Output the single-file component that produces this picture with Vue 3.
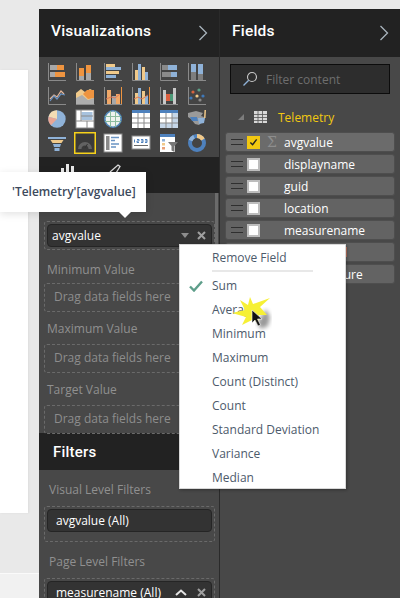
<script setup>
const fields = [
  { name: 'avgvalue', checked: true, sigma: true },
  { name: 'displayname' },
  { name: 'guid' },
  { name: 'location' },
  { name: 'measurename' },
  { name: 'sensorlevel', warn: true },
  { name: 'tempmeasure' }
]
const menuItems = ['Sum', 'Average', 'Minimum', 'Maximum', 'Count (Distinct)', 'Count', 'Standard Deviation', 'Variance', 'Median']
const zones = ['Minimum Value', 'Maximum Value', 'Target Value']
</script>

<template>
  <div class="page">
    <div class="canvas-area">
      <div class="canvas-card"></div>
      <div class="canvas-foot"></div>
    </div>

    <section class="viz">
      <header class="head">
        <h2>Visualizations</h2>
        <svg class="chev" width="10" height="16" viewBox="0 0 10 16"><path d="M1.5 1 L8.5 8 L1.5 15" fill="none" stroke="#a9b4bd" stroke-width="1.3"/></svg>
      </header>

      <div class="gallery">
        <svg viewBox="0 0 20 20"><path d="M1.5 2v17.5H19" class="ax"/><rect x="3" y="4" width="7" height="5" fill="#a8a8a8"/><rect x="10" y="4" width="7" height="5" fill="#ee9440"/><rect x="3" y="11" width="5" height="5" fill="#a8a8a8"/><rect x="8" y="11" width="10" height="5" fill="#ee9440"/></svg>
        <svg viewBox="0 0 20 20"><path d="M1.5 2v17.5H19" class="ax"/><rect x="4" y="7" width="5" height="8" fill="#ee9440"/><rect x="4" y="15" width="5" height="4" fill="#a8a8a8"/><rect x="11" y="4" width="5" height="8" fill="#ee9440"/><rect x="11" y="12" width="5" height="7" fill="#a8a8a8"/></svg>
        <svg viewBox="0 0 20 20"><path d="M1.5 2v17.5H19" class="ax"/><rect x="3" y="3" width="9" height="3" fill="#f0c98a"/><rect x="3" y="6" width="15" height="3" fill="#8fb2d8"/><rect x="3" y="10" width="13" height="3" fill="#f0c98a"/><rect x="3" y="14" width="10" height="3" fill="#8fb2d8"/></svg>
        <svg viewBox="0 0 20 20"><path d="M1.5 2v17.5H19" class="ax"/><rect x="4" y="9" width="3" height="10" fill="#f0c98a"/><rect x="7" y="3" width="3" height="16" fill="#8fb2d8"/><rect x="11" y="6" width="3" height="13" fill="#f0c98a"/><rect x="14" y="11" width="3" height="8" fill="#8fb2d8"/></svg>
        <svg viewBox="0 0 20 20"><path d="M1.5 2v17.5H19" class="ax"/><rect x="3" y="4" width="6" height="5" fill="#8a8a8a"/><rect x="9" y="4" width="9" height="5" fill="#8fb2d8"/><rect x="3" y="11" width="9" height="5" fill="#8a8a8a"/><rect x="12" y="11" width="6" height="5" fill="#8fb2d8"/></svg>
        <svg viewBox="0 0 20 20"><path d="M1.5 2v17.5H19" class="ax"/><rect x="4" y="3" width="5" height="8" fill="#8fb2d8"/><rect x="4" y="11" width="5" height="8" fill="#7d7d7d"/><rect x="11" y="3" width="5" height="10" fill="#8fb2d8"/><rect x="11" y="13" width="5" height="6" fill="#7d7d7d"/></svg>

        <svg viewBox="0 0 20 20"><path d="M1.5 2v17.5H19" class="ax"/><path d="M3 14l4-4 3 2 4-6 3 3" fill="none" stroke="#e8b99b" stroke-width="1.2"/><path d="M3 16l4-5 3 3 4-5 4 1" fill="none" stroke="#6a94c4" stroke-width="1.2"/></svg>
        <svg viewBox="0 0 20 20"><path d="M1 19.5H19.5" class="ax"/><path d="M1 8l5-4 4 3 5-3 4 2v13H1z" fill="#f0c98a"/><path d="M8 9l4-4 7 0v8l-6 1z" fill="#ee9440"/><path d="M1 13l6-3 6 5 6-2v6H1z" fill="#adadad"/></svg>
        <svg viewBox="0 0 20 20"><path d="M1.5 2v17.5H19" class="ax"/><path d="M18.5 2v17" stroke="#ee9440" stroke-width="1"/><rect x="4" y="5" width="4" height="14" fill="#f0a868"/><rect x="9" y="11" width="4" height="8" fill="#a8a8a8"/><rect x="13" y="9" width="4" height="10" fill="#f0a868"/><path d="M3 14l5-2 4 1 5-4" fill="none" stroke="#dc7a5a"/></svg>
        <svg viewBox="0 0 20 20"><path d="M1.5 2v17.5H19" class="ax"/><path d="M18.5 2v17" stroke="#ee9440" stroke-width="1"/><rect x="4" y="8" width="3" height="11" fill="#f0c98a"/><rect x="7" y="3" width="3" height="16" fill="#8fb2d8"/><rect x="11" y="6" width="3" height="13" fill="#f0c98a"/><rect x="14" y="11" width="3" height="8" fill="#8fb2d8"/><path d="M3 14l4-2 4 2 6-4" fill="none" stroke="#dc7a5a"/></svg>
        <svg viewBox="0 0 20 20"><path d="M1.5 2v17.5H19" class="ax"/><rect x="4" y="5" width="3" height="14" fill="#c9c9c9"/><rect x="7" y="9" width="4" height="7" fill="#dc5f3f"/><rect x="11" y="9" width="3" height="7" fill="#4c9a78"/><rect x="14" y="3" width="3" height="16" fill="#c9c9c9"/></svg>
        <svg viewBox="0 0 20 20"><path d="M1.5 2v17.5H19" class="ax"/><circle cx="6" cy="7" r="1.6" fill="#d8643e"/><circle cx="12" cy="5" r="1.6" fill="#5c9f86"/><circle cx="4" cy="13" r="1.6" fill="#3f78b8"/><circle cx="10" cy="11" r="1.6" fill="#f0c98a"/><circle cx="16" cy="11" r="1.6" fill="#3f78b8"/><circle cx="13" cy="15" r="1.6" fill="#8a8a8a"/></svg>

        <svg viewBox="0 0 20 20"><circle cx="10" cy="10" r="8.7" fill="#8fb2d8"/><path d="M10 10V1.3A8.7 8.7 0 0 0 1.6 7.7z" fill="#f3dcb4"/><path d="M10 10L1.6 7.7A8.7 8.7 0 0 0 4 16.3z" fill="#e9a695"/></svg>
        <svg viewBox="0 0 20 20"><rect x="1" y="1" width="18" height="18" fill="#fff" stroke="#8a8a8a"/><rect x="6.5" y="3" width="11" height="8" fill="#a7c2de"/><path d="M1 12h18M6 1v11M12 12v7M6 7h12" stroke="#8a8a8a" fill="none"/></svg>
        <svg viewBox="0 0 20 20"><circle cx="10" cy="10" r="8.2" fill="#eef3ee" stroke="#4f86b8" stroke-width="1.6"/><path d="M2 7.5h16M2 12.5h16M7.5 2v16M12.5 2v16" stroke="#8cbc9e" fill="none"/></svg>
        <svg viewBox="0 0 20 20"><rect x="1" y="1" width="18" height="18" fill="#fff"/><rect x="1" y="1" width="18" height="3" fill="#4e81bd"/><path d="M1 9h18M1 14h18M7 4v15M13 4v15" stroke="#8a8a8a" fill="none"/></svg>
        <svg viewBox="0 0 20 20"><rect x="1" y="1" width="18" height="18" fill="#fff"/><rect x="1" y="1" width="18" height="3" fill="#4e81bd"/><rect x="13" y="4" width="6" height="15" fill="#c5d6e8"/><rect x="1" y="14" width="18" height="5" fill="#c5d6e8"/><path d="M1 9h18M1 14h18M7 4v15M13 4v15" stroke="#8a8a8a" fill="none"/></svg>
        <svg viewBox="0 0 20 20"><path d="M1 4l8-2 7 2-2 3 3 1-1 4-4 4-4-1-4-5-3-2z" fill="#9a9a9a"/><path d="M3 8h7l1 4H5z" fill="#4e81bd"/><path d="M11 9h7l-1 5-5 1z" fill="#8fb2d8"/><path d="M17.5 1h1.5l-.5 8h-1.5z" fill="#f0c98a"/></svg>

        <svg viewBox="0 0 20 20"><path d="M1 4h18v2H1z" fill="#8fb2d8"/><path d="M3.5 7h13l-2 3h-9z" fill="#f0c98a"/><path d="M6 11h8l-1 3H7z" fill="#8fb2d8"/><rect x="7.5" y="15" width="5" height="3" fill="#8fb2d8"/></svg>
        <svg class="selected" viewBox="0 0 22 22"><rect x="0.75" y="0.75" width="20.5" height="20.5" fill="#3a3a3a" stroke="#f7d21a" stroke-width="1.5"/><path d="M4 17A7 7 0 0 1 18 17h-3.5A3.500 3.500 0 0 0 7.500 17z" fill="#626262"/><path d="M11 16l2.500-4" stroke="#333"/></svg>
        <svg viewBox="0 0 20 20"><rect x="1" y="1" width="18" height="18" fill="#fff" stroke="#8a8a8a"/><rect x="3" y="3" width="3.5" height="14" fill="#8a8a8a"/><path d="M8 4.5h8M8 7.5h4M8 11h8M8 14h5" stroke="#6a94c4" fill="none" stroke-width="1.3"/></svg>
        <svg viewBox="0 0 20 20"><rect x="1" y="3" width="18" height="13" fill="#fff" stroke="#8a8a8a"/><path d="M3.5 9.5V6.5M6 6.5h2v1.5H6v1.5h2M10 6.5h2v3h-2M12 8h-2M14 6.500h2v1.500h-2M16 8v1.500h-2" stroke="#4e81bd" fill="none"/><path d="M3 12.5h14" stroke="#6a6a6a" fill="none"/></svg>
        <svg viewBox="0 0 20 20"><rect x="1" y="1" width="15" height="18" fill="#fff"/><rect x="1" y="1" width="15" height="3" fill="#4e81bd"/><rect x="3" y="6" width="3" height="2.5" fill="#8fb2d8"/><rect x="3" y="10" width="3" height="2.5" fill="#f0c98a"/><rect x="3" y="14" width="3" height="2.5" fill="#e9a17a"/><path d="M9 9h10l-3.5 4v6l-3-1.5V13z" fill="#777"/></svg>
        <svg viewBox="0 0 20 20"><circle cx="10" cy="10" r="7" fill="none" stroke="#4e81bd" stroke-width="4"/><path d="M10 3a7 7 0 0 1 6 3.5" fill="none" stroke="#f0c98a" stroke-width="4"/><path d="M3.5 7.5A7 7 0 0 1 7 3.7" fill="none" stroke="#8fb2d8" stroke-width="4"/></svg>
      </div>

      <div class="tabs">
        <svg width="16" height="9" viewBox="0 0 16 9"><path d="M1 4h3v5H1zM6 0h3v9H6zM11 2h3v7h-3z" fill="#e8e8e8"/></svg>
        <svg width="12" height="9" viewBox="0 0 12 9"><path d="M1 8L9 1l2 1.5L7 9" fill="none" stroke="#d8d8d8" stroke-width="1.3"/></svg>
      </div>

      <div class="wells">
        <i class="scroll"></i>
        <div class="well first">
          <div class="pill tight">
            <span>avgvalue</span>
            <svg class="caret" width="8" height="5" viewBox="0 0 8 5"><path d="M0 0h8L4 5z" fill="#8d8d8d"/></svg>
            <svg class="x" width="9" height="9" viewBox="0 0 9 9"><path d="M1 1l7 7M8 1L1 8" stroke="#a0a0a0" stroke-width="2"/></svg>
          </div>
        </div>
        <template v-for="z in zones" :key="z">
          <div class="label">{{ z }}</div>
          <div class="well drop">Drag data fields here</div>
        </template>
      </div>

      <header class="filters-head"><h2>Filters</h2></header>

      <div class="filters">
        <div class="label">Visual Level Filters</div>
        <div class="well"><div class="pill"><span>avgvalue (All)</span></div></div>
        <div class="label">Page Level Filters</div>
        <div class="well">
          <div class="pill">
            <span>measurename (All)</span>
            <svg class="up" width="12" height="7" viewBox="0 0 12 7"><path d="M1 6l5-4.5L11 6" fill="none" stroke="#e4e4e4" stroke-width="2"/></svg>
            <svg class="x" width="9" height="9" viewBox="0 0 9 9"><path d="M1 1l7 7M8 1L1 8" stroke="#a0a0a0" stroke-width="2"/></svg>
          </div>
        </div>
      </div>
    </section>

    <section class="fields">
      <header class="head">
        <h2>Fields</h2>
        <svg class="chev" width="10" height="16" viewBox="0 0 10 16"><path d="M1.5 1 L8.5 8 L1.5 15" fill="none" stroke="#a9b4bd" stroke-width="1.3"/></svg>
      </header>
      <div class="fields-body">
        <div class="search">
          <svg width="16" height="16" viewBox="0 0 16 16"><circle cx="10" cy="6" r="4.5" fill="none" stroke="#c8c8c8" stroke-width="1.1"/><path d="M6.7 9.3L1.5 14.5" stroke="#8fb2d8" stroke-width="1.3"/></svg>
          <span>Filter content</span>
        </div>
        <div class="table-row">
          <svg width="6" height="6" viewBox="0 0 6 6"><path d="M6 0v6H0z" fill="#7c7c7c"/></svg>
          <svg width="13" height="12" viewBox="0 0 13 12"><rect width="13" height="12" fill="#d8d8d8"/><path d="M0 3.5h13M0 6.5h13M0 9.5h13M4 0v12M8.5 0v12" stroke="#555" stroke-width=".8"/></svg>
          <span>Telemetry</span>
        </div>
        <div class="rows">
          <div v-for="f in fields" :key="f.name" class="row" :class="{ active: f.checked }">
            <i class="grip"></i>
            <i class="check" :class="{ on: f.checked }">
              <svg v-if="f.checked" width="10" height="9" viewBox="0 0 10 9"><path d="M1.5 4.5L4 7l4.5-6" fill="none" stroke="#222" stroke-width="1.6"/></svg>
            </i>
            <span class="sigma">{{ f.sigma ? 'Σ' : '' }}</span>
            <span class="fname" :class="{ warn: f.warn }">{{ f.name }}</span>
          </div>
        </div>
      </div>
    </section>

    <div class="tooltip">'Telemetry'[avgvalue]</div>

    <div class="menu">
      <div class="remove">Remove Field</div>
      <div class="sep"></div>
      <div v-for="(m, i) in menuItems" :key="m" class="item">
        <svg v-if="i === 0" class="tick" width="14" height="12" viewBox="0 0 14 12"><path d="M1 6.5L5 10.5L13 1.5" fill="none" stroke="#5e9e8a" stroke-width="2.4"/></svg>
        {{ m }}
      </div>
    </div>

    <svg class="pointer" width="60" height="50" viewBox="0 0 60 50">
      <defs><filter id="soft"><feGaussianBlur stdDeviation="2"/></filter></defs>
      <path d="M38 14l4 8-2 9-7 3-4-6z" fill="#000" opacity=".4" filter="url(#soft)"/>
      <path d="M22 2L25 9L42 3L32 12L39 20L31 20L30 30L26 24L14 30L18 22L4 18L17 15L12 5L20 10z" fill="#f6f035"/>
      <path d="M24 15v13l3-3 3 6 2.5-1-3-6h4.5z" fill="#111" stroke="#fff" stroke-width=".6"/>
    </svg>
  </div>
</template>

<style>
html, body { margin: 0; background: #e9e9e9; }
</style>

<style scoped>
.page {
  position: relative;
  width: 400px;
  height: 598px;
  overflow: hidden;
  display: grid;
  grid-template-columns: 39px 181px 180px;
  background: #e9e9e9;
  font-family: "Open Sans", "Liberation Sans", sans-serif;
  font-size: 12px;
}
.canvas-area { display: flex; flex-direction: column; padding-top: 70px; }
.canvas-card { width: 28px; height: 443px; background: #fff; box-shadow: 1px 0 2px #dcdcdc; flex: none; }
.canvas-foot { margin-top: 60px; flex: 1; background: #f1f1f1; border-top: 1px solid #fafafa; }

.viz, .fields { margin-top: 9px; display: flex; flex-direction: column; }
.viz { background: #484848; border-right: 1px solid #2a2a2a; box-sizing: border-box; }
.fields { background: #484848; }

.head {
  height: 48px;
  flex: none;
  background: #222;
  display: flex;
  align-items: center;
  justify-content: space-between;
  padding: 0 11px 0 12px;
  box-sizing: border-box;
}
h2 {
  margin: 0;
  color: #fff;
  font: 500 15.5px Roboto, "Liberation Sans", sans-serif;
  letter-spacing: .2px;
  position: relative;
  top: -2px;
}
.chev { position: relative; top: 0; }

.gallery {
  height: 100px;
  flex: none;
  box-sizing: border-box;
  padding: 4px 0 0 8px;
  display: grid;
  grid-template-columns: repeat(6, 28px);
  grid-auto-rows: 24px;
  background: #444;
}
.gallery svg { width: 20px; height: 20px; }
.gallery svg.selected { width: 22px; height: 22px; margin: -1px 0 0 -1px; }
.ax { fill: none; stroke: #8a8a8a; stroke-width: 1; }

.tabs {
  height: 36px;
  flex: none;
  background: #222;
  display: flex;
  align-items: flex-start;
  gap: 33px;
  padding: 7px 0 0 21px;
  box-sizing: border-box;
}

.wells {
  position: relative;
  height: 240px;
  flex: none;
  padding: 28px 4px 0 5px;
  box-sizing: border-box;
}
.scroll { position: absolute; right: 1px; top: 0; width: 3px; height: 90px; background: #6b6b6b; }

.well {
  border: 1px dashed #6a6a6a;
  border-radius: 3px;
  padding: 2px;
  box-sizing: border-box;
}
.pill {
  height: 23px;
  background: #333;
  border: 1px solid #252525;
  border-radius: 4px;
  box-sizing: border-box;
  display: flex;
  align-items: center;
  padding: 0 5px 0 8px;
  color: #fff;
  font-size: 12px;
}
.pill.tight { padding-left: 4px; }
.pill span { flex: 1; }
.caret { margin-right: 8px; }
.up { margin-right: 10px; }
.label {
  color: #909090;
  font-size: 12px;
  line-height: 16px;
  padding-left: 3px;
  margin: 9px 0 7px;
}
.well.first + .label { margin: 12px 0 5px; }
.drop {
  height: 29px;
  line-height: 26px;
  color: #8d8d8d;
  padding: 0 0 0 9px;
  margin-bottom: 3px;
}

.filters-head {
  height: 37px;
  flex: none;
  background: #222;
  display: flex;
  align-items: center;
  padding: 0 14px;
  box-sizing: border-box;
}
.filters-head h2 { top: 0; font-size: 15px; }
.filters { flex: 1; padding: 0 4px 0 5px; overflow: hidden; }
.filters .well { height: 36px; }
.filters .label { margin: 12px 0 8px 2px; }
.filters .well + .label { margin-top: 12px; }

.fields-body { flex: 1; padding: 7px 5px 0; position: relative; }
.search {
  height: 30px;
  margin: 0 5px;
  box-sizing: border-box;
  background: #2d2d2d;
  border: 1px solid #0c0c0c;
  display: flex;
  align-items: center;
  gap: 8px;
  padding-left: 11px;
  color: #6e6e6e;
  font-size: 12px;
}
.table-row {
  height: 20px;
  margin-top: 13px;
  display: flex;
  align-items: center;
  padding-left: 13px;
  gap: 10px;
  color: #f2c811;
  font-size: 12px;
}
.table-row span { margin-left: 1px; }
.rows { margin-top: 5px; display: flex; flex-direction: column; gap: 2px; }
.row {
  height: 20px;
  background: #636363;
  border: 1px solid #4e4e4e;
  border-radius: 3px;
  box-sizing: border-box;
  display: flex;
  align-items: center;
  padding-left: 5px;
  color: #fff;
}
.row.active { background: #6b6b6b; }
.grip {
  width: 12px;
  height: 6px;
  border-top: 1px solid #2f2f2f;
  border-bottom: 1px solid #2f2f2f;
  box-sizing: border-box;
}
.check {
  width: 13px;
  height: 13px;
  margin-left: 4px;
  background: #fff;
  border: 2px solid #bdbdbd;
  box-sizing: border-box;
  display: flex;
  align-items: center;
  justify-content: center;
}
.check.on { background: #f2c811; border-color: #f2c811; }
.sigma { width: 10px; margin-left: 7px; color: #8e8e8e; font: 14px "DejaVu Serif", serif; line-height: 1; }
.fname { margin-left: 7px; font-size: 12px; }
.fname.warn { color: #f0a040; }

.tooltip {
  position: absolute;
  left: 0;
  top: 172px;
  width: 146px;
  height: 40px;
  box-sizing: border-box;
  padding-left: 12px;
  line-height: 39px;
  background: #fff;
  color: #3d4a5c;
  font-size: 12px;
  font-weight: 600;
  white-space: nowrap;
  box-shadow: 0 2px 8px rgba(0,0,0,.12);
}
.tooltip::after {
  content: "";
  position: absolute;
  left: 119px;
  top: 40px;
  border-left: 6px solid transparent;
  border-right: 6px solid transparent;
  border-top: 6px solid #fff;
}

.menu {
  position: absolute;
  left: 179px;
  top: 244px;
  width: 167px;
  height: 245px;
  box-sizing: border-box;
  background: #fff;
  border: 1px solid #d8d8d8;
  box-shadow: 1px 1px 3px rgba(0,0,0,.3);
  padding-top: 4px;
  color: #4d5a6b;
  font-size: 12px;
}
.remove { height: 17px; line-height: 17px; padding-left: 32px; }
.sep { height: 2px; width: 101px; background: #e8e8e8; margin: 4px 0 2px 32px; }
.item {
  position: relative;
  height: 24px;
  line-height: 24px;
  padding-left: 32px;
  white-space: nowrap;
}
.tick { position: absolute; left: 9px; top: 6px; }
.pointer { position: absolute; left: 228px; top: 295px; }
</style>
